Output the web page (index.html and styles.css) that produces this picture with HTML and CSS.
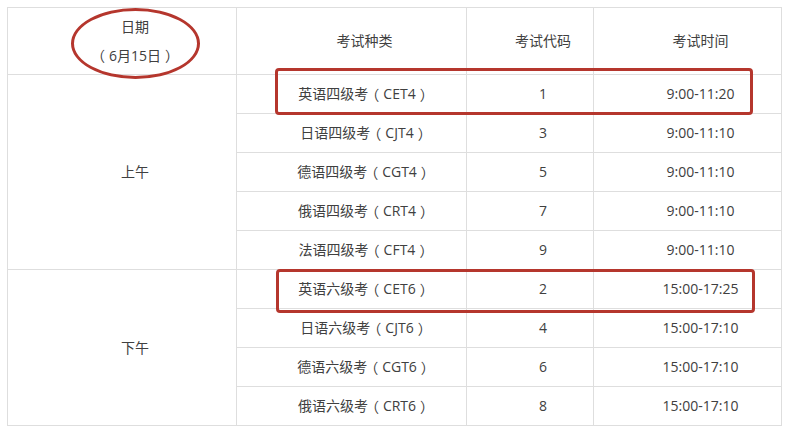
FILE: index.html
```html
<!DOCTYPE html>
<html lang="zh-CN">
<head>
<meta charset="utf-8">
<title>考试时间安排</title>
<link rel="stylesheet" href="styles.css">
</head>
<body>
<div class="wrap">
  <div class="grid">
    <div class="cell head"><span>日期</span><span><span class="fw">（</span>6月15日<span class="fw">）</span></span></div>
    <div class="cell head">考试种类</div>
    <div class="cell head">考试代码</div>
    <div class="cell head">考试时间</div>

    <div class="cell period am">上午</div>
    <div class="cell">英语四级考<span class="fw">（</span>CET4<span class="fw">）</span></div><div class="cell">1</div><div class="cell">9:00-11:20</div>
    <div class="cell">日语四级考<span class="fw">（</span>CJT4<span class="fw">）</span></div><div class="cell">3</div><div class="cell">9:00-11:10</div>
    <div class="cell">德语四级考<span class="fw">（</span>CGT4<span class="fw">）</span></div><div class="cell">5</div><div class="cell">9:00-11:10</div>
    <div class="cell">俄语四级考<span class="fw">（</span>CRT4<span class="fw">）</span></div><div class="cell">7</div><div class="cell">9:00-11:10</div>
    <div class="cell">法语四级考<span class="fw">（</span>CFT4<span class="fw">）</span></div><div class="cell">9</div><div class="cell">9:00-11:10</div>

    <div class="cell period pm">下午</div>
    <div class="cell">英语六级考<span class="fw">（</span>CET6<span class="fw">）</span></div><div class="cell">2</div><div class="cell">15:00-17:25</div>
    <div class="cell">日语六级考<span class="fw">（</span>CJT6<span class="fw">）</span></div><div class="cell">4</div><div class="cell">15:00-17:10</div>
    <div class="cell">德语六级考<span class="fw">（</span>CGT6<span class="fw">）</span></div><div class="cell">6</div><div class="cell">15:00-17:10</div>
    <div class="cell">俄语六级考<span class="fw">（</span>CRT6<span class="fw">）</span></div><div class="cell">8</div><div class="cell">15:00-17:10</div>
  </div>
  <div class="mark ellipse"></div>
  <div class="mark box box-cet4"></div>
  <div class="mark box box-cet6"></div>
</div>
</body>
</html>
```

FILE: styles.css
```css
html, body {
  margin: 0;
  padding: 0;
  background: #ffffff;
}

.wrap {
  position: relative;
  padding: 7px;
  width: 789px;
  height: 431px;
  box-sizing: border-box;
  font-family: "Open Sans", "Noto Sans CJK SC", sans-serif;
  font-size: 14px;
  color: #404040;
}

.grid {
  display: grid;
  grid-template-columns: 229px 230px 127px 188px;
  grid-template-rows: 67px repeat(9, 39px);
  border-left: 1px solid #dedede;
  border-top: 1px solid #dedede;
  width: max-content;
}

.cell {
  box-sizing: border-box;
  border-right: 1px solid #dedede;
  border-bottom: 1px solid #dedede;
  display: flex;
  align-items: center;
  justify-content: center;
  padding-left: 26px;
  line-height: 20px;
  white-space: nowrap;
}

.fw {
  font-family: "Noto Sans CJK SC", sans-serif;
  font-feature-settings: "halt" 1;
  text-spacing-trim: space-all;
  padding: 0 4px;
}

.head {
  flex-direction: column;
  line-height: 28px;
}

.period.am {
  grid-column: 1;
  grid-row: 2 / 7;
}

.period.pm {
  grid-column: 1;
  grid-row: 7 / 11;
}

.mark {
  position: absolute;
  box-sizing: border-box;
  border: 3px solid #b5362d;
}

.ellipse {
  left: 71px;
  top: 8px;
  width: 129px;
  height: 71px;
  border-radius: 50%;
}

.box {
  border-radius: 4px;
}

.box-cet4 {
  left: 275px;
  top: 68px;
  width: 478px;
  height: 47px;
}

.box-cet6 {
  left: 276px;
  top: 269px;
  width: 479px;
  height: 44px;
}
```
